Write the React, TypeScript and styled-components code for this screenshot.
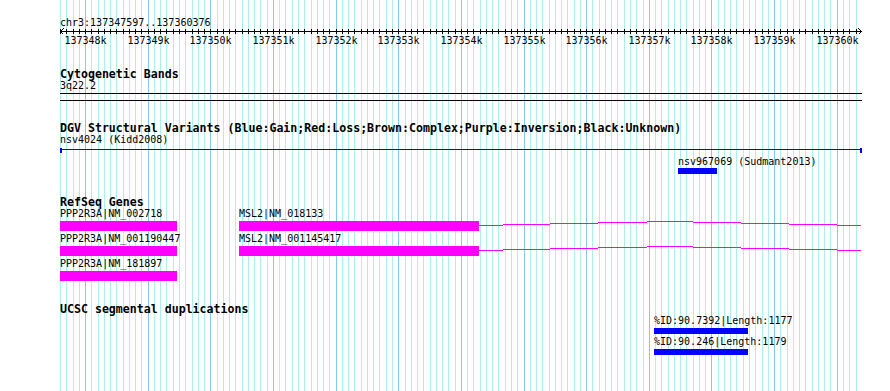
import React from "react";
import styled, { createGlobalStyle } from "styled-components";

const START = 137347597;
const END = 137360376;
const X0 = 59.8;
const PX_PER_BP = 0.06264;
const WIDTH = 890;
const HEIGHT = 391;

const toX = (bp: number) => X0 + (bp - START) * PX_PER_BP;

const ticks: { x: number; bp: number; major: boolean }[] = [];
for (let bp = Math.ceil(START / 100) * 100; bp <= END; bp += 100) {
  ticks.push({ x: Math.round(toX(bp)) + 0.5, bp, major: bp % 1000 === 0 });
}

const GlobalStyle = createGlobalStyle`
  body {
    margin: 0;
    background: #ffffff;
  }
`;

type Gene = { name: string; left: number; exon: number; intron?: number[][] };

// intron steps: [fromX, toX, offset from exon top]
const mslIntron = [
  [479, 503, 4], [503, 550, 3], [550, 598, 2], [598, 647, 1], [647, 693, 0],
  [693, 741, 1], [741, 789, 2], [789, 837, 3], [837, 861, 4],
];

const geneRows: Gene[][] = [
  [
    { name: "PPP2R3A|NM_002718", left: 60, exon: 117 },
    { name: "MSL2|NM_018133", left: 239, exon: 240, intron: mslIntron },
  ],
  [
    { name: "PPP2R3A|NM_001190447", left: 60, exon: 117 },
    { name: "MSL2|NM_001145417", left: 239, exon: 240, intron: mslIntron },
  ],
  [{ name: "PPP2R3A|NM_181897", left: 60, exon: 117 }],
];

const segDups = [
  { name: "%ID:90.7392|Length:1177", left: 654, width: 94 },
  { name: "%ID:90.246|Length:1179", left: 654, width: 94 },
];

const Page = styled.div`
  position: relative;
  width: ${WIDTH}px;
  height: ${HEIGHT}px;
  overflow: hidden;
  background: #ffffff;
  color: #000000;
  font-family: "DejaVu Sans Mono", "Liberation Mono", monospace;
`;

const GridSvg = styled.svg`
  position: absolute;
  top: 0;
  left: 0;
`;

const Tracks = styled.div`
  position: relative;
  display: flex;
  flex-direction: column;
`;

const RulerTitle = styled.div`
  margin-top: 16px;
  padding-left: 60px;
  font-size: 10px;
  line-height: 13px;
  height: 13px;
`;

const AxisSvg = styled.svg`
  display: block;
  overflow: visible;
`;

const TickLabels = styled.div`
  position: relative;
  height: 13px;
`;

const TickLabel = styled.span`
  position: absolute;
  top: 0;
  transform: translateX(-50%);
  font-size: 10px;
  line-height: 13px;
  white-space: nowrap;
`;

const TrackTitle = styled.div<{ $gap: number }>`
  margin-top: ${(p) => p.$gap}px;
  padding-left: 60px;
  font-size: 11.6px;
  font-weight: bold;
  line-height: 12px;
  height: 12px;
  white-space: nowrap;
`;

const Label = styled.div`
  font-size: 10px;
  line-height: 12px;
  height: 12px;
  white-space: nowrap;
`;

const BandLabel = styled(Label)`
  padding-left: 60px;
`;

const BandBox = styled.div`
  margin: 1px 0 0 60px;
  width: 802px;
  height: 6px;
  border-top: 1px solid #000000;
  border-bottom: 1px solid #000000;
`;

const Lane = styled.div<{ $h: number }>`
  position: relative;
  height: ${(p) => p.$h}px;
`;

const Feature = styled.div`
  position: absolute;
  top: 0;
  display: flex;
  flex-direction: column;
  align-items: flex-start;
`;

const SpanGlyph = styled.div`
  margin-top: 2px;
  display: flex;
  align-items: flex-start;
  width: 802px;
  height: 5px;
`;

const SpanCap = styled.div`
  width: 2px;
  height: 5px;
  background: #0000ff;
`;

const SpanLine = styled.div`
  flex: 1;
  height: 1px;
  margin-top: 1px;
  background: #0000ff;
`;

const Box = styled.div<{ $h: number; $color: string; $top?: number }>`
  margin-top: ${(p) => p.$top ?? 0}px;
  height: ${(p) => p.$h}px;
  background: ${(p) => p.$color};
`;

const GeneGlyph = styled.div`
  margin-top: 1px;
  display: flex;
  align-items: flex-start;
`;

const IntronSvg = styled.svg`
  display: block;
`;

function Grid() {
  return (
    <GridSvg width={WIDTH} height={HEIGHT} shapeRendering="crispEdges">
      {ticks.map((t) => (
        <line
          key={t.bp}
          x1={t.x}
          x2={t.x}
          y1={0}
          y2={HEIGHT}
          stroke={t.major ? "#87c6f0" : "#afeeee"}
          strokeWidth={1}
        />
      ))}
    </GridSvg>
  );
}

function Axis() {
  return (
    <AxisSvg width={WIDTH} height={5} shapeRendering="crispEdges">
      <line x1={60} x2={862} y1={2.5} y2={2.5} stroke="#000" />
      {ticks.map((t) => (
        <line key={t.bp} x1={t.x} x2={t.x} y1={0} y2={5} stroke="#000" />
      ))}
      <polyline points="63.5,-0.5 60.5,2.5 63.5,5.5" fill="none" stroke="#000" />
      <polyline points="858.5,-0.5 861.5,2.5 858.5,5.5" fill="none" stroke="#000" />
    </AxisSvg>
  );
}

function GeneFeature({ gene }: { gene: Gene }) {
  const intronWidth = gene.intron ? gene.intron[gene.intron.length - 1][1] - (gene.left + gene.exon) : 0;
  const base = gene.left + gene.exon;
  return (
    <Feature style={{ left: gene.left }}>
      <Label>{gene.name}</Label>
      <GeneGlyph>
        <Box $h={10} $color="#ff00ff" style={{ width: gene.exon }} />
        {gene.intron && (
          <IntronSvg width={intronWidth} height={10} shapeRendering="crispEdges">
            {gene.intron.map(([a, b, dy]) => (
              <line key={a} x1={a - base} x2={b - base} y1={dy + 0.5} y2={dy + 0.5} stroke="#ff00ff" />
            ))}
          </IntronSvg>
        )}
      </GeneGlyph>
    </Feature>
  );
}

export default function App() {
  return (
    <Page>
      <GlobalStyle />
      <Grid />
      <Tracks>
        <RulerTitle>chr3:137347597..137360376</RulerTitle>
        <Axis />
        <TickLabels>
          {ticks
            .filter((t) => t.major)
            .map((t) => (
              <TickLabel key={t.bp} style={{ left: t.x }}>
                {t.bp / 1000}k
              </TickLabel>
            ))}
        </TickLabels>

        <TrackTitle $gap={21}>Cytogenetic Bands</TrackTitle>
        <BandLabel>3q22.2</BandLabel>
        <BandBox />

        <TrackTitle $gap={21}>
          DGV Structural Variants (Blue:Gain;Red:Loss;Brown:Complex;Purple:Inversion;Black:Unknown)
        </TrackTitle>
        <Lane $h={22}>
          <Feature style={{ left: 60 }}>
            <Label>nsv4024 (Kidd2008)</Label>
            <SpanGlyph>
              <SpanCap />
              <SpanLine />
              <SpanCap />
            </SpanGlyph>
          </Feature>
        </Lane>
        <Lane $h={18}>
          <Feature style={{ left: 678 }}>
            <Label>nsv967069 (Sudmant2013)</Label>
            <Box $h={6} $color="#0000ff" style={{ width: 39 }} />
          </Feature>
        </Lane>

        <TrackTitle $gap={22}>RefSeq Genes</TrackTitle>
        {geneRows.map((row, i) => (
          <Lane $h={25} key={i}>
            {row.map((g) => (
              <GeneFeature key={g.name} gene={g} />
            ))}
          </Lane>
        ))}

        <TrackTitle $gap={20}>UCSC segmental duplications</TrackTitle>
        {segDups.map((s) => (
          <Lane $h={21} key={s.name}>
            <Feature style={{ left: s.left }}>
              <Label>{s.name}</Label>
              <Box $h={6} $top={1} $color="#0000ff" style={{ width: s.width }} />
            </Feature>
          </Lane>
        ))}
      </Tracks>
    </Page>
  );
}
